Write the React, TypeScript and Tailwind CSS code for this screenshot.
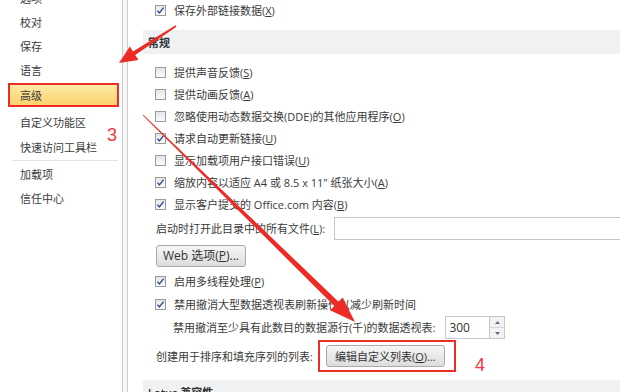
import type { ReactNode } from "react";

const font = "font-['Open_Sans','Noto_Sans_CJK_SC',sans-serif]";

function Key({ k }: { k: string }) {
  return (
    <>
      (<span className="underline underline-offset-1">{k}</span>)
    </>
  );
}

function Box({ checked }: { checked?: boolean }) {
  return (
    <span className="w-[11px] h-[11px] shrink-0 border border-[#9a9a9a] bg-gradient-to-b from-[#e6e6e6] to-[#fbfbfb] flex items-center justify-center">
      {checked && (
        <svg width="9" height="9" viewBox="0 0 9 9">
          <path d="M1.5 4.8 L3.4 7 L7.6 1.6" fill="none" stroke="#2c4f8f" strokeWidth="1.4" />
        </svg>
      )}
    </span>
  );
}

function Check({ checked, children, h = "h-[22px]" }: { checked?: boolean; children: ReactNode; h?: string }) {
  return (
    <div className={`${h} flex items-center gap-[8px] pl-[27px]`}>
      <Box checked={checked} />
      <span className="whitespace-nowrap">{children}</span>
    </div>
  );
}

function Section({ title }: { title: string }) {
  return (
    <div className="ml-[15px] h-[24px] bg-[#f0f1f3] flex items-center pl-[5px] font-semibold text-[#333] whitespace-nowrap">
      {title}
    </div>
  );
}

const sideItems = ["选项", "校对", "保存", "语言"];

export default function App() {
  return (
    <div className={`relative w-[620px] h-[392px] overflow-hidden bg-white text-[11px] leading-none text-[#3b3b3b] ${font}`}>
      <div className="flex h-full">
        {/* sidebar */}
        <div className="w-[122px] shrink-0 -mt-[14px]">
          {sideItems.map((s, i) => (
            <div key={s} className={`${i === 3 ? "h-[25px]" : "h-[24px]"} flex items-center pl-[20px]`}>
              {s}
            </div>
          ))}
          <div className="ml-[8px] w-[111px] h-[24px] border-2 border-[#ea2d26] bg-gradient-to-b from-[#fdeaa6] to-[#f9d26a] flex items-center pl-[10px]">
            高级
          </div>
          <div className="mt-[3px] h-[25px] flex items-center pl-[20px]">自定义功能区</div>
          <div className="h-[25px] flex items-center pl-[20px]">快速访问工具栏</div>
          <div className="ml-[12px] w-[106px] h-px bg-[#e2e2e2]" />
          <div className="mt-px h-[24px] flex items-center pl-[20px]">加载项</div>
          <div className="h-[25px] flex items-center pl-[20px]">信任中心</div>
        </div>
        <div className="w-[6px] shrink-0 border-l border-r border-[#cdcdcd] bg-[#f7f7f7]" />

        {/* main */}
        <div className="flex-1 min-w-0">
          <Check checked h="h-[20px]">
            保存外部链接数据<Key k="X" />
          </Check>
          <div className="mt-[10px]">
            <Section title="常规" />
          </div>
          <div className="mt-[7px]">
            <Check>
              提供声音反馈<Key k="S" />
            </Check>
            <Check>
              提供动画反馈<Key k="A" />
            </Check>
            <Check>
              忽略使用动态数据交换(DDE)的其他应用程序<Key k="O" />
            </Check>
            <Check checked>
              请求自动更新链接<Key k="U" />
            </Check>
            <Check>
              显示加载项用户接口错误<Key k="U" />
            </Check>
            <Check checked>
              缩放内容以适应 A4 或 8.5 x 11" 纸张大小<Key k="A" />
            </Check>
            <Check checked>
              显示客户提交的 Office.com 内容<Key k="B" />
            </Check>
          </div>
          <div className="h-[27px] flex items-center pl-[28px]">
            <span className="whitespace-nowrap">
              启动时打开此目录中的所有文件<Key k="L" />:
            </span>
            <div className="ml-[9px] w-[320px] shrink-0 h-[23px] border border-[#c6c6c6] bg-white" />
          </div>
          <div className="h-[28px] flex items-center pl-[28px]">
            <div className="h-[22px] w-[90px] rounded-[3px] border border-[#a9a9a9] bg-gradient-to-b from-[#f6f6f6] to-[#dddddd] flex items-center justify-center text-[12px] text-[#333]">
              Web 选项<Key k="P" />...
            </div>
          </div>
          <Check checked h="h-[23px]">
            启用多线程处理<Key k="P" />
          </Check>
          <Check checked>禁用撤消大型数据透视表刷新操作以减少刷新时间</Check>
          <div className="h-[25px] flex items-center pl-[45px]">
            <span className="whitespace-nowrap">禁用撤消至少具有此数目的数据源行(千)的数据透视表:</span>
            <div className="ml-[10px] h-[23px] flex shrink-0">
              <div className="w-[45px] border border-[#c6c6c6] flex items-center pl-[3px] text-[12px] text-[#333]">300</div>
              <div className="w-[15px] border border-l-0 border-[#c6c6c6] flex flex-col">
                <div className="flex-1 flex items-center justify-center border-b border-[#d6d6d6] bg-[#f3f3f3]">
                  <svg width="5" height="3" viewBox="0 0 5 3"><path d="M0 3 L2.5 0 L5 3Z" fill="#5a6a8a" /></svg>
                </div>
                <div className="flex-1 flex items-center justify-center bg-[#f3f3f3]">
                  <svg width="5" height="3" viewBox="0 0 5 3"><path d="M0 0 L2.5 3 L5 0Z" fill="#5a6a8a" /></svg>
                </div>
              </div>
            </div>
          </div>
          <div className="h-[32px] flex items-center pl-[28px]">
            <span className="whitespace-nowrap">创建用于排序和填充序列的列表:</span>
            <div className="ml-[5px] h-[32px] border-2 border-[#ea2d26] flex items-center pl-[6px] pr-[9px] shrink-0">
              <div className="h-[22px] w-[119px] rounded-[3px] border border-[#a9a9a9] bg-gradient-to-b from-[#f6f6f6] to-[#dddddd] flex items-center justify-center text-[#333] whitespace-nowrap">
                编辑自定义列表<Key k="O" />...
              </div>
            </div>
            <span className="ml-[19px] mt-[18px] text-[18px] text-[#f0383a] font-['Liberation_Sans',sans-serif]">4</span>
          </div>
          <div className="mt-[8px]">
            <Section title="Lotus 兼容性" />
          </div>
        </div>
      </div>

      {/* annotations */}
      <span className="absolute left-[107px] top-[126px] text-[18px] leading-none text-[#f0383a] font-['Liberation_Sans',sans-serif]">
        3
      </span>
      <svg className="absolute inset-0 pointer-events-none" width="620" height="392">
        <polygon
          points="175.6,25.3 133,51.5 129.8,46.5 119,63 138.5,59.9 135.2,54.9 176.4,26.7"
          fill="#ee2a24"
        />
        <polygon
          points="143.35,114.64 338.5,301.7 342.7,297.4 355,322 330.1,310.2 334.3,305.9 142.65,115.36"
          fill="#ee2a24"
        />
      </svg>
    </div>
  );
}
